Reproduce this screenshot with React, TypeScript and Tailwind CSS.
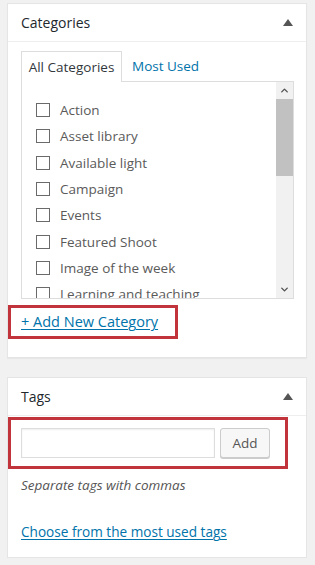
import { ChevronUp, ChevronDown } from 'lucide-react';

const categories = [
  'Action',
  'Asset library',
  'Available light',
  'Campaign',
  'Events',
  'Featured Shoot',
  'Image of the week',
  'Learning and teaching',
  'Nature',
];

function Toggle() {
  return (
    <div className="w-0 h-0 border-l-[5px] border-r-[5px] border-b-[7px] border-l-transparent border-r-transparent border-b-[#555]" />
  );
}

function PanelHeader({ title }: { title: string }) {
  return (
    <div className="h-[38px] flex items-center justify-between pl-[13px] pr-[13px] border-b border-[#eee]">
      <span className="text-[14px] text-[#23282d]">{title}</span>
      <Toggle />
    </div>
  );
}

export default function App() {
  return (
    <div
      className="w-[315px] h-[565px] bg-[#f1f1f1] pt-[3px] pl-[7px] overflow-hidden"
      style={{ fontFamily: "'Open Sans', 'Noto Sans', sans-serif" }}
    >
      {/* Categories */}
      <div className="w-[300px] h-[355px] bg-white border border-[#e5e5e5] shadow-[0_1px_1px_rgba(0,0,0,0.04)]">
        <PanelHeader title="Categories" />
        <div className="pl-[13px] pt-[9px]">
          <div className="flex items-end text-[13.5px]">
            <div className="w-[101px] h-[31px] flex items-center justify-center border border-b-0 border-[#ddd] bg-white text-[#32373c] relative z-10 -mb-px">
              All Categories
            </div>
            <div className="h-[30px] flex items-center pl-[10px] text-[#0073aa]">Most Used</div>
          </div>
          <div className="w-[273px] h-[218px] border border-[#ddd] bg-white flex overflow-hidden">
            <div className="flex-1 pt-[15px]">
              {categories.map((c) => (
                <div key={c} className="h-[26.3px] flex items-center pl-[14px]">
                  <div className="w-[14px] h-[14px] border border-[#6a6a6a] bg-white shrink-0" />
                  <span className="ml-[10px] text-[13.5px] text-[#5a5a5a]">{c}</span>
                </div>
              ))}
            </div>
            <div className="w-[17px] bg-[#f1f1f1] flex flex-col">
              <div className="h-[17px] flex items-center justify-center">
                <ChevronUp size={11} strokeWidth={3} className="text-[#505050]" />
              </div>
              <div className="h-[77px] bg-[#c1c1c1]" />
              <div className="flex-1" />
              <div className="h-[17px] flex items-center justify-center">
                <ChevronDown size={11} strokeWidth={3} className="text-[#505050]" />
              </div>
            </div>
          </div>
        </div>
        <div className="relative mt-[6px] h-[34px] flex items-center pl-[13px]">
          <span className="text-[14.5px] text-[#0073aa] underline underline-offset-2">+ Add New Category</span>
          <div className="absolute left-0 top-0 w-[170px] h-[34px] border-[3px] border-[#c1343c]" />
        </div>
      </div>

      {/* Tags */}
      <div className="mt-[19px] w-[300px] h-[181px] bg-white border border-[#e5e5e5]">
        <PanelHeader title="Tags" />
        <div className="relative px-[13px] pt-[12px]">
          <div className="flex items-center">
            <div className="w-[194px] h-[30px] border border-[#ddd] shadow-[inset_0_1px_2px_rgba(0,0,0,0.07)]" />
            <div className="ml-[5px] w-[50px] h-[30px] rounded-[3px] border border-[#ccc] bg-[#f7f7f7] shadow-[0_1px_0_#ccc] flex items-center justify-center text-[13.5px] text-[#555]">
              Add
            </div>
          </div>
          <div className="absolute left-0 top-[1px] w-[280px] h-[52px] border-[3px] border-[#c1343c]" />
          <p className="mt-[17px] text-[13.5px] italic text-[#555]">Separate tags with commas</p>
          <p className="mt-[27px] text-[13.6px] text-[#0073aa] underline underline-offset-2">
            Choose from the most used tags
          </p>
        </div>
      </div>
    </div>
  );
}
